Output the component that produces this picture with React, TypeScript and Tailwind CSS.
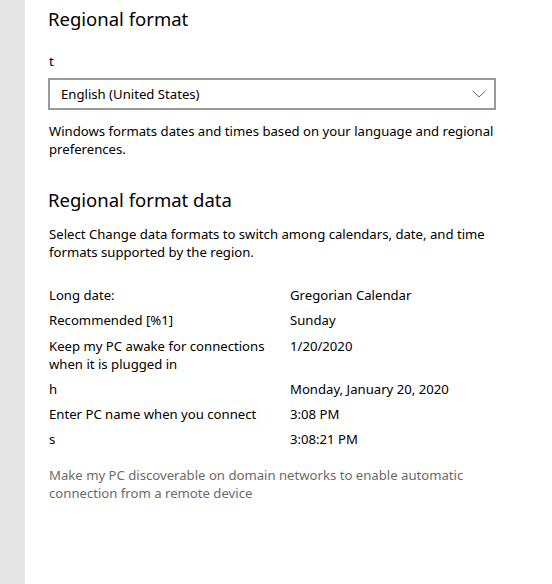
const rows: Array<[string, string]> = [
  ["Long date:", "Gregorian Calendar"],
  ["Recommended [%1]", "Sunday"],
  ["Keep my PC awake for connections when it is plugged in", "1/20/2020"],
  ["h", "Monday, January 20, 2020"],
  ["Enter PC name when you connect", "3:08 PM"],
  ["s", "3:08:21 PM"],
];

function Chevron() {
  return (
    <svg width="14" height="8" viewBox="0 0 14 8" fill="none" className="text-[#666]">
      <path d="M0.5 0.8 L7 7 L13.5 0.8" stroke="currentColor" strokeWidth="1" />
    </svg>
  );
}

export default function App() {
  return (
    <div className="flex h-[584px] w-[552px] bg-white font-['Noto_Sans',sans-serif] text-[13.15px] leading-[18px] text-black">
      <div className="w-[25px] shrink-0 bg-[#e6e6e6]" />
      <div className="flex flex-1 flex-col pl-[23px] pt-[5px]">
        <h1 className="text-[18.5px] leading-[28px]">Regional format</h1>
        <p className="mt-[19px] pl-px">t</p>
        <div className="mt-[8px] flex h-[32px] w-[448px] items-center justify-between border-2 border-[#999] pl-[11px] pr-[8px]">
          <span>English (United States)</span>
          <Chevron />
        </div>
        <p className="mt-[12px] w-[460px] pl-px">
          Windows formats dates and times based on your language and regional preferences.
        </p>
        <h2 className="mt-[28px] text-[18.5px] leading-[28px]">Regional format data</h2>
        <p className="mt-[11px] w-[460px] pl-px">
          Select Change data formats to switch among calendars, date, and time formats supported by the region.
        </p>
        <div className="mt-[25px] grid grid-cols-[241px_1fr] gap-y-[7px] pl-px">
          {rows.map(([label, value], i) => (
            <div key={label} className="contents">
              <span className={`pr-[16px] ${i === 2 ? "pt-px" : ""}`}>{label}</span>
              <span className={i === 2 ? "pt-px" : ""}>{value}</span>
            </div>
          ))}
        </div>
        <p className="mt-[18px] w-[460px] pl-px text-[#6b6b6b]">
          Make my PC discoverable on domain networks to enable automatic connection from a remote device
        </p>
      </div>
    </div>
  );
}
